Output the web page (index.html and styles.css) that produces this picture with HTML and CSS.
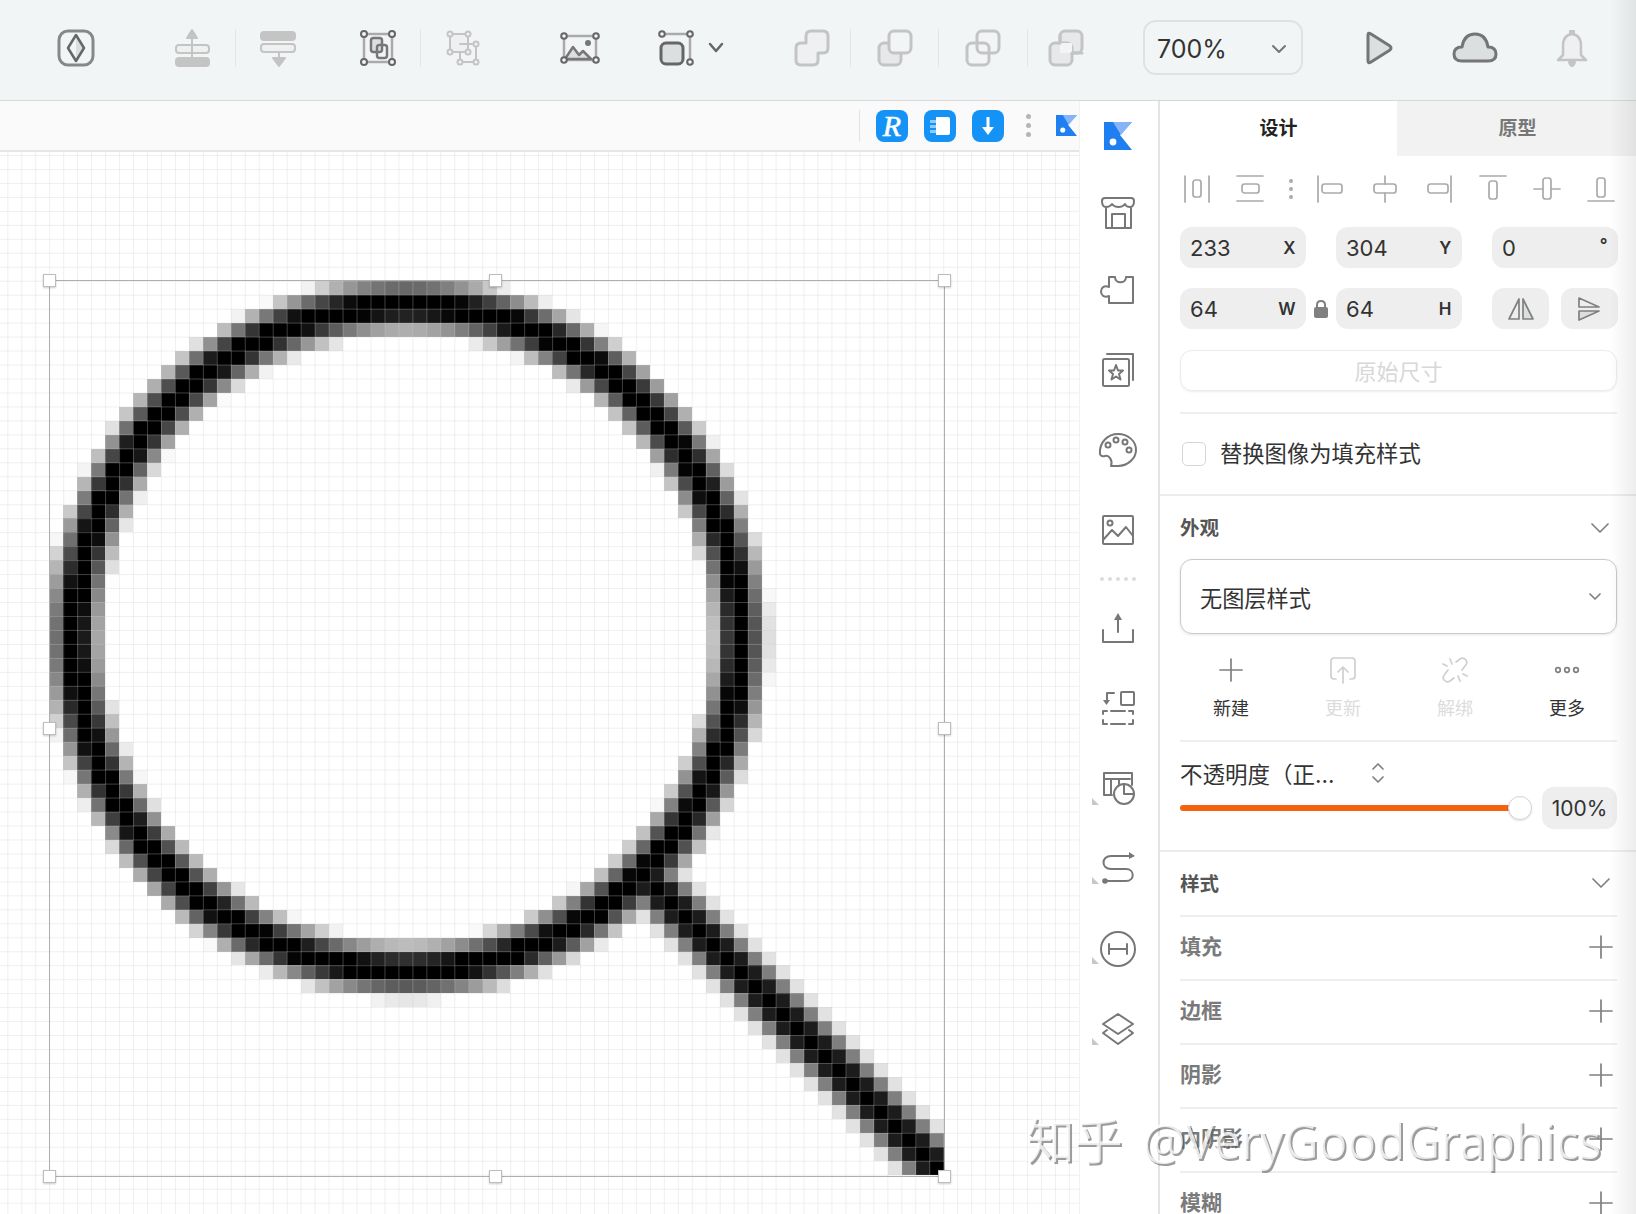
FILE: index.html
```html
<!DOCTYPE html>
<html lang="zh-CN">
<head>
<meta charset="utf-8">
<title>Sketch</title>
<link rel="stylesheet" href="styles.css">
</head>
<body>
<header class="toolbar">
  <svg class="tb ico" viewBox="0 0 40 40"><rect class="w3 c8" x="3" y="3" width="34" height="34" rx="9"/><path class="f-d none-s" d="M20 7L28 20L20 33Z"/><path class="w25 c6" d="M20 7L28 20L20 33L12 20Z"/></svg>
  <svg class="tb ico ml76 light" viewBox="0 0 40 40"><rect class="f-l" x="4" y="17" width="33" height="8" rx="3"/><rect class="f-b" x="4" y="30" width="33" height="8" rx="3"/><path class="f-b" d="M20 2L25 10H15Z"/><path d="M20 10V31"/></svg>
  <div class="sep ml23"></div>
  <svg class="tb ico ml23 light" viewBox="0 0 40 40"><rect class="f-b" x="2" y="4" width="34" height="8" rx="3"/><rect class="f-l" x="2" y="16" width="34" height="8" rx="3"/><path d="M20 24V32"/><path class="f-b" d="M14 30H26L20 38Z"/></svg>
  <svg class="tb ico ml59" viewBox="0 0 40 40"><path class="w25 ca" d="M7 6H33M7 34H33M6 7V33M34 7V33"/><rect class="f-d w25" x="13" y="10" width="11" height="14" rx="2.5"/><rect class="w25" x="19" y="17" width="10" height="13" rx="2.5"/><circle class="hd" cx="6" cy="6" r="3"/><circle class="hd" cx="34" cy="6" r="3"/><circle class="hd" cx="6" cy="34" r="3"/><circle class="hd" cx="34" cy="34" r="3"/></svg>
  <div class="sep ml22"></div>
  <svg class="tb ico ml23 light" viewBox="0 0 40 40"><rect class="f-l" x="6" y="6" width="18" height="18"/><path d="M16 16H32V34H16V24"/><circle class="hd" cx="6" cy="6" r="2.5"/><circle class="hd" cx="24" cy="6" r="2.5"/><circle class="hd" cx="6" cy="24" r="2.5"/><circle class="hd" cx="24" cy="24" r="2.5"/><circle class="hd" cx="32" cy="16" r="2.5"/><circle class="hd" cx="32" cy="34" r="2.5"/><circle class="hd" cx="16" cy="34" r="2.5"/></svg>
  <svg class="tb ico ml75" viewBox="0 0 40 40"><path class="w25 ca" d="M8 8H34M8 32H34M5 10V30M37 10V30"/><path class="f-d w25" d="M6 31L14 19L20 27L24 23L32 31Z"/><circle class="solid" cx="29" cy="15" r="3"/><circle class="hd" cx="5" cy="8" r="2.8"/><circle class="hd" cx="37" cy="8" r="2.8"/><circle class="hd" cx="5" cy="32" r="2.8"/><circle class="hd" cx="37" cy="32" r="2.8"/></svg>
  <svg class="tb ico ml57" viewBox="0 0 40 40"><path class="w25 ca" d="M9 6H31M34 9V31"/><rect class="f-d w3 c6" x="5" y="15" width="22" height="21" rx="5"/><circle class="hd" cx="6" cy="6" r="2.8"/><circle class="hd" cx="34" cy="6" r="2.8"/><circle class="hd" cx="34" cy="34" r="2.8"/></svg>
  <svg class="chev ico ml12" viewBox="0 0 16 16"><path class="w25 c6" d="M2 4L8 11L14 4"/></svg>
  <svg class="tb ico ml68 light" viewBox="0 0 40 40"><path class="f-l w3" d="M19 3H31Q36 3 36 8V20Q36 25 31 25H26V32Q26 37 21 37H9Q4 37 4 32V20Q4 15 9 15H14V8Q14 3 19 3Z"/></svg>
  <div class="sep ml18"></div>
  <svg class="tb ico ml24 light" viewBox="0 0 40 40"><rect class="f-d w3" x="4" y="15" width="22" height="22" rx="5"/><rect class="f-bar w3" x="14" y="3" width="22" height="22" rx="5"/></svg>
  <div class="sep ml23"></div>
  <svg class="tb ico ml24 light" viewBox="0 0 40 40"><rect class="f-bar w3" x="4" y="15" width="22" height="22" rx="5"/><rect class="w3" x="14" y="3" width="22" height="22" rx="5"/></svg>
  <div class="sep ml24"></div>
  <svg class="tb ico ml18 light" viewBox="0 0 40 40"><rect class="f-d w3" x="14" y="3" width="22" height="22" rx="5"/><rect class="f-d w3" x="4" y="15" width="22" height="22" rx="5"/><path class="f-bar none-s" d="M14 15H26V25H14Z"/><path class="w3" d="M14 15V8M26 25H36"/></svg>
  <div class="zoom-select ml57"><span>700%</span><svg class="chev-s ico" viewBox="0 0 16 16"><path class="c7" d="M2 5L8 11L14 5"/></svg></div>
  <svg class="tb ico ml56" viewBox="0 0 40 40"><path class="f-d w3 c7" d="M9 7Q9 4 12 6L31 18Q33 20 31 22L12 34Q9 36 9 33Z"/></svg>
  <svg class="tb ico ml52 wide" viewBox="0 0 48 40"><path class="f-d w3 c7" d="M11 33Q3 33 3 26Q3 19 11 19Q13 6 24 6Q35 6 37 19Q45 19 45 26Q45 33 37 33Z"/></svg>
  <svg class="tb ico ml53 light" viewBox="0 0 40 40"><path class="f-l w25" d="M20 6Q29 7 29 18V27L34 32H6L11 27V18Q11 7 20 6Z"/><path class="f-b" d="M18 3H22V6H18ZM17 34H23Q22 38 20 38Q18 38 17 34Z"/></svg>
</header>

<div class="main">
  <section class="work">
    <div class="strip">
      <div class="strip-sep"></div>
      <div class="app-badge ml16"><span class="r-mark">R</span></div>
      <div class="app-badge ml16">
        <svg class="badge-svg" viewBox="0 0 32 32"><path class="b-white" d="M12 7H24Q26 7 26 9V23Q26 25 24 25H12Z"/><path class="b-pale" d="M6 10H12V13H6ZM6 15H12V18H6ZM6 20H12V23H6Z"/></svg>
      </div>
      <div class="app-badge ml16">
        <svg class="badge-svg" viewBox="0 0 32 32"><path class="b-line" d="M16 7V19"/><path class="b-white" d="M10 17H22L16 25Z"/></svg>
      </div>
      <div class="strip-dots"><i></i><i></i><i></i></div>
      <svg class="strip-kite" viewBox="0 0 28 28"><path class="k-blue" d="M0 0H28L16 13L28 28H0Z"/><path class="k-pale" d="M9 0H28L17 13Z"/><circle class="k-dot" cx="9" cy="20" r="3.4"/></svg>
    </div>
    <div class="board">
      <canvas id="art" class="art" width="64" height="64"></canvas>
      <div class="board-grid"></div>
      <div class="selection">
        <i class="hnd tl"></i><i class="hnd tc"></i><i class="hnd tr"></i>
        <i class="hnd ml"></i><i class="hnd mr"></i>
        <i class="hnd bl"></i><i class="hnd bc"></i><i class="hnd br"></i>
      </div>
    </div>
  </section>

  <nav class="rail">
    <svg class="rail-ico g37" viewBox="0 0 40 40"><path class="k-blue" d="M6 6H34L22 19L34 34H6Z"/><path class="k-pale" d="M15 6H34L23 19Z"/><circle class="k-dot" cx="15" cy="26" r="3.4"/></svg>
    <svg class="rail-ico ico g37" viewBox="0 0 40 40"><path d="M7 5H33Q36 5 36 8Q36 14 32 14Q28 14 27 11Q25 14 20.500 14Q16 14 14 11Q12 14 8 14Q4 14 4 8Q4 5 7 5ZM8 14V35H33V14M14 35V21H27V35"/></svg>
    <svg class="rail-ico ico g39" viewBox="0 0 40 40"><path d="M11 7H17C17 14 28 14 28 7H35V33H11V26C6 28 3 25 3 21.500C3 18 6 15 11 17Z"/></svg>
    <svg class="rail-ico ico g41" viewBox="0 0 40 40"><path d="M9 5H35V31"/><rect x="5" y="10" width="26" height="27" rx="1.500"/><path d="M18 16L20 21.500H25L21 25L22.500 30.500L18 27.500L13.500 30.500L15 25L11 21.500H16Z"/></svg>
    <svg class="rail-ico ico g40" viewBox="0 0 40 40"><path d="M13 36C15 30 11 25 7 26Q3 27 2 24C1 12 10 4 20 4C30 4 38 11 38 20C38 29 29 36 20 36Q15 36 13 36Z"/><circle cx="10" cy="15" r="2.500"/><circle cx="18" cy="10" r="2.500"/><circle cx="27" cy="12" r="2.500"/><circle cx="31" cy="20" r="2.500"/></svg>
    <svg class="rail-ico ico g20" viewBox="0 0 40 40"><rect x="5" y="6" width="30" height="28" rx="1"/><circle cx="12" cy="13" r="2.500"/><path d="M5 30L14 20L20 26L28 17L35 26"/></svg>
    <div class="rail-dots g27"><i></i><i></i><i></i><i></i><i></i></div>
    <svg class="rail-ico ico g40" viewBox="0 0 40 40"><path d="M20 24V8"/><path class="solid" d="M20 5L24 12H16Z"/><path d="M5 22V34H35V22"/></svg>
    <svg class="rail-ico ico g42" viewBox="0 0 40 40"><rect x="23" y="4" width="13" height="13" rx="1"/><path d="M16 5H9V13"/><path class="solid" d="M5 12H12L8.500 17Z"/><path d="M9 23H5V26M13 23H27M31 23H35V26M5 32V36H9M13 36H27M31 36H35V32"/></svg>
    <svg class="rail-ico ico g39" viewBox="0 0 40 40"><path class="mark" d="M-6 35H1L-6 28Z"/><path d="M34 15V3H6V25H14M6 9H32M13 9V25M21 9V17"/><circle class="bgw" cx="26" cy="24" r="10"/><path d="M26 14V24H36"/></svg>
    <svg class="rail-ico ico g40" viewBox="0 0 40 40"><path class="mark" d="M-6 35H1L-6 28Z"/><path d="M33 7H13C3 7 3 20 13 20H28C37 20 37 32 28 32H9"/><path class="solid" d="M31 3L37 7L31 10Z"/><circle class="solid" cx="7" cy="32" r="2.800"/></svg>
    <svg class="rail-ico ico g41" viewBox="0 0 40 40"><path class="mark" d="M-6 35H1L-6 28Z"/><circle cx="20" cy="20" r="17"/><path d="M11 15V25M11 20H29M29 15V25"/></svg>
    <svg class="rail-ico ico" viewBox="0 0 40 40"><path class="mark" d="M-6 35H1L-6 28Z"/><path d="M20 4L35 14L20 24L5 14Z"/><path d="M9 20L5 23L20 34L35 23L31 20"/></svg>
  </nav>

  <aside class="panel">
    <div class="tabs"><div class="tab active">设计</div><div class="tab">原型</div></div>

    <div class="align-row">
      <svg class="al ico thin" viewBox="0 0 28 28"><path d="M2 1V27M26 1V27"/><rect x="10" y="5" width="8" height="17" rx="2.500"/></svg>
      <svg class="al ico thin ml25" viewBox="0 0 28 28"><path d="M1 1H27M1 26H27"/><rect x="6" y="9" width="17" height="9" rx="2.500"/></svg>
      <div class="v-dots ml13"><i></i><i></i><i></i></div>
      <svg class="al ico thin ml11" viewBox="0 0 28 28"><path d="M2 1V27"/><rect x="6" y="9" width="20" height="9" rx="2.500"/></svg>
      <svg class="al ico thin ml27" viewBox="0 0 28 28"><path d="M14 1V9M14 18V27"/><rect x="3" y="9" width="22" height="9" rx="2.500"/></svg>
      <svg class="al ico thin ml26" viewBox="0 0 28 28"><path d="M26 1V27"/><rect x="3" y="9" width="20" height="9" rx="2.500"/></svg>
      <svg class="al ico thin ml26" viewBox="0 0 28 28"><path d="M1 1H27"/><rect x="10" y="6" width="8" height="18" rx="2.500"/></svg>
      <svg class="al ico thin ml26" viewBox="0 0 28 28"><path d="M1 14H10M18 14H27"/><rect x="10" y="3" width="8" height="21" rx="2.500"/></svg>
      <svg class="al ico thin ml26" viewBox="0 0 28 28"><path d="M1 26H27"/><rect x="10" y="3" width="8" height="19" rx="2.500"/></svg>
    </div>

    <div class="fields">
      <div class="field"><span>233</span><b>X</b></div>
      <div></div>
      <div class="field"><span>304</span><b>Y</b></div>
      <div></div>
      <div class="field"><span>0</span><b class="deg">°</b></div>
    </div>
    <div class="fields second">
      <div class="field"><span>64</span><b>W</b></div>
      <div class="lock-slot"><svg class="lock" viewBox="0 0 14 18"><rect class="lock-body" x="0" y="7" width="14" height="11" rx="2"/><path class="lock-arc" d="M3 8V5Q3 1 7 1Q11 1 11 5V8"/></svg></div>
      <div class="field"><span>64</span><b>H</b></div>
      <div></div>
      <div class="mirror-pair">
        <div class="mirror"><svg class="ico thin dark" viewBox="0 0 28 28"><path d="M12 4V24H2Z"/><path class="f-d" d="M16 4V24H26Z"/></svg></div>
        <div class="mirror"><svg class="ico thin dark" viewBox="0 0 28 28"><path d="M4 3L24 12H4Z"/><path class="f-d" d="M4 16H24L4 25Z"/></svg></div>
      </div>
    </div>
    <div class="orig-btn">原始尺寸</div>
    <div class="rule"></div>
    <label class="check-row"><span class="check"></span><span class="check-text">替换图像为填充样式</span></label>

    <div class="full-rule"></div>
    <div class="sec-head first"><span>外观</span><svg class="sec-chev ico thin dark" viewBox="0 0 18 10"><path d="M1 1L9 9L17 1"/></svg></div>
    <div class="style-select"><span>无图层样式</span><svg class="chev-s ico thin dark" viewBox="0 0 16 16"><path d="M3 5L8 10L13 5"/></svg></div>
    <div class="actions">
      <div class="act"><svg class="ico thin dark" viewBox="0 0 28 28"><path d="M14 3V25M3 14H25"/></svg><span>新建</span></div>
      <div class="act off"><svg class="ico thin" viewBox="0 0 28 28"><path d="M7 23H5Q2 23 2 20V5Q2 2 5 2H23Q26 2 26 5V20Q26 23 23 23H21M14 27V11M9 16L14 11L19 16"/></svg><span>更新</span></div>
      <div class="act off"><svg class="ico thin" viewBox="0 0 28 28"><path d="M15 6L19 3Q22 1 25 4Q27 7 24 10L21 14M13 22L9 25Q6 27 3 24Q1 21 4 18L7 14M11 8L9 3M6 10L2 8M17 20L19 25M22 18L26 20"/></svg><span>解绑</span></div>
      <div class="act"><svg class="ico thin dark" viewBox="0 0 28 28"><circle cx="5" cy="14" r="2.300"/><circle cx="14" cy="14" r="2.300"/><circle cx="23" cy="14" r="2.300"/></svg><span>更多</span></div>
    </div>
    <div class="rule action-rule"></div>
    <div class="opacity">
      <div class="op-left">
        <div class="op-label"><span>不透明度（正...</span><svg class="stepper ico thin dark" viewBox="0 0 14 24"><path d="M2 8L7 3L12 8M2 16L7 21L12 16"/></svg></div>
        <div class="slider"><div class="knob"></div></div>
      </div>
      <div class="op-field">100%</div>
    </div>
    <div class="full-rule"></div>

    <div class="sec-head row-first"><b>样式</b><svg class="sec-chev ico thin dark" viewBox="0 0 18 10"><path d="M1 1L9 9L17 1"/></svg></div>
    <div class="row"><span>填充</span><svg class="plus ico thin dark" viewBox="0 0 22 22"><path d="M11 0V22M0 11H22"/></svg></div>
    <div class="row"><span>边框</span><svg class="plus ico thin dark" viewBox="0 0 22 22"><path d="M11 0V22M0 11H22"/></svg></div>
    <div class="row"><span>阴影</span><svg class="plus ico thin dark" viewBox="0 0 22 22"><path d="M11 0V22M0 11H22"/></svg></div>
    <div class="row"><span>内阴影</span><svg class="plus ico thin dark" viewBox="0 0 22 22"><path d="M11 0V22M0 11H22"/></svg></div>
    <div class="row"><span>模糊</span><svg class="plus ico thin dark" viewBox="0 0 22 22"><path d="M11 0V22M0 11H22"/></svg></div>
  </aside>
</div>

<div class="edge-shade"></div>
<div class="watermark">知乎 @VeryGoodGraphics</div>
<script src="app.js"></script>
</body>
</html>
```

FILE: styles.css
```css
* { box-sizing: border-box; }
html, body { margin: 0; padding: 0; }
body {
  position: relative;
  width: 1636px;
  height: 1214px;
  overflow: hidden;
  background: #fff;
  font-family: Inter, "Noto Sans CJK SC", sans-serif;
  color: #333;
}

/* shared icon styling */
.ico { fill: none; stroke: #777; stroke-width: 2; stroke-linecap: round; stroke-linejoin: round; overflow: visible; }
.ico.light { stroke: #c4c4c4; }
.ico.thin { stroke: #aaa; stroke-width: 1.7; }
.ico.thin.dark { stroke: #808080; }
.w25 { stroke-width: 2.5; }
.w3 { stroke-width: 3; }
.c6 { stroke: #666; }
.c7 { stroke: #757575; }
.c8 { stroke: #888; }
.ca { stroke: #aaa; }
.f-d { fill: #dcdfe0; }
.light .f-d { fill: #e6e8e9; }
.f-l { fill: #eef0f1; }
.f-b { fill: #c4c4c4; }
.f-bar { fill: #f2f5f6; }
.none-s { stroke: none; }
.hd { fill: #f2f5f6; stroke: #666; stroke-width: 2; }
.light .hd { stroke: #c4c4c4; }
.solid { fill: #777; stroke: none; }
.mark { fill: #c8c8c8; stroke: none; }
.bgw { fill: #fff; }

.ml11 { margin-left: 11px; }
.ml12 { margin-left: 12px; }
.ml13 { margin-left: 13px; }
.ml16 { margin-left: 16px; }
.ml18 { margin-left: 18px; }
.ml22 { margin-left: 22px; }
.ml23 { margin-left: 23px; }
.ml24 { margin-left: 24px; }
.ml25 { margin-left: 25px; }
.ml26 { margin-left: 26px; }
.ml27 { margin-left: 27px; }
.ml52 { margin-left: 52px; }
.ml53 { margin-left: 53px; }
.ml56 { margin-left: 56px; }
.ml57 { margin-left: 57px; }
.ml59 { margin-left: 59px; }
.ml68 { margin-left: 68px; }
.ml75 { margin-left: 75px; }
.ml76 { margin-left: 76px; }

/* toolbar */
.toolbar {
  height: 101px;
  display: flex;
  align-items: center;
  padding: 0 0 5px 56px;
  background: #f2f5f6;
  border-bottom: 1px solid #d6d9da;
}
.tb { width: 40px; height: 40px; flex: none; }
.tb.wide { width: 48px; }
.chev { width: 16px; height: 16px; flex: none; }
.sep { width: 1px; height: 38px; background: #e2e5e6; flex: none; }
.zoom-select {
  width: 160px;
  height: 55px;
  flex: none;
  display: flex;
  align-items: center;
  justify-content: space-between;
  padding: 2px 14px 0 12px;
  border: 2px solid #dfe2e3;
  border-radius: 13px;
  font-size: 25px;
  color: #333;
}
.chev-s { width: 16px; height: 16px; flex: none; }

/* main */
.main { display: flex; height: 1113px; }
.work { width: 1079px; flex: none; display: flex; flex-direction: column; }
.strip {
  height: 51px;
  flex: none;
  display: flex;
  align-items: center;
  padding-left: 859px;
  background: #fafafa;
  border-bottom: 2px solid #e6e6e6;
  overflow: hidden;
}
.strip-sep { width: 1px; height: 32px; background: #e2e2e2; flex: none; }
.app-badge {
  width: 32px;
  height: 32px;
  flex: none;
  border-radius: 8px;
  background: #1592f6;
  display: flex;
  align-items: center;
  justify-content: center;
}
.r-mark {
  font: italic 400 30px "Liberation Serif", serif;
  -webkit-text-stroke: 0.6px #fff;
  color: #fff;
  line-height: 1;
}
.badge-svg { width: 32px; height: 32px; }
.b-white { fill: #fff; }
.b-pale { fill: #8fcbfa; }
.b-line { stroke: #fff; stroke-width: 3; fill: none; }
.strip-dots { display: flex; flex-direction: column; gap: 4px; margin-left: 22px; width: 5px; flex: none; }
.strip-dots i { width: 5px; height: 5px; border-radius: 50%; background: #b5b5b5; }
.strip-kite { width: 21px; height: 21px; flex: none; margin-left: 25px; }
.k-blue { fill: #1f7ff0; }
.k-pale { fill: #86b4f6; }
.k-dot { fill: #fff; }

.board { position: relative; flex: 1; background: #fff; overflow: hidden; }
.art {
  position: absolute;
  left: 49.3px;
  top: 128.7px;
  width: 894.4px;
  height: 894.4px;
  image-rendering: pixelated;
}
.board-grid {
  position: absolute;
  inset: 0;
  background-image:
    linear-gradient(to right, rgba(205, 205, 205, 0.3) 1.2px, transparent 1.2px),
    linear-gradient(to bottom, rgba(205, 205, 205, 0.3) 1.2px, transparent 1.2px);
  background-size: 13.975px 13.975px;
  background-position: 7.3px 3px;
}
.selection {
  position: absolute;
  left: 49px;
  top: 128px;
  width: 896px;
  height: 897px;
  border: 1px solid #aeaeae;
}
.hnd {
  position: absolute;
  width: 13px;
  height: 13px;
  background: #fff;
  border: 1px solid #bdbdbd;
  box-shadow: 0 1px 2px rgba(0, 0, 0, 0.2);
}
.tl, .tc, .tr { top: -7px; }
.ml, .mr { top: 441px; }
.bl, .bc, .br { bottom: -7px; }
.tl, .ml, .bl { left: -7px; }
.tc, .bc { left: 439px; }
.tr, .mr, .br { right: -7px; }

/* rail */
.rail {
  width: 81px;
  flex: none;
  display: flex;
  flex-direction: column;
  align-items: center;
  padding: 15px 2px 0 0;
  background: #fff;
  border-left: 1px solid #f1f1f1;
  border-right: 2px solid #e4e4e4;
}
.rail-ico { width: 40px; height: 40px; flex: none; overflow: visible; }
.g20 { margin-bottom: 20px; }
.g27 { margin-bottom: 27px; }
.g37 { margin-bottom: 37px; }
.g39 { margin-bottom: 39px; }
.g40 { margin-bottom: 40px; }
.g41 { margin-bottom: 41px; }
.g42 { margin-bottom: 42px; }
.rail-dots { display: flex; gap: 4px; height: 4px; flex: none; margin-top: 7px; }
.rail-dots i { width: 4px; height: 4px; border-radius: 50%; background: #dcdcdc; }

/* panel */
.panel { flex: 1; min-width: 0; background: #fff; overflow: hidden; }
.tabs { display: flex; height: 55px; }
.tab {
  flex: 1;
  display: flex;
  align-items: center;
  justify-content: center;
  padding: 0 0 5px 2px;
  font-size: 19px;
  font-weight: 700;
  color: #777;
  background: #f2f2f2;
}
.tab.active { color: #222; background: #fff; padding-left: 0; }

.align-row { display: flex; align-items: center; height: 28px; margin: 19px 0 0 23px; }
.al { width: 28px; height: 28px; flex: none; }
.v-dots { display: flex; flex-direction: column; gap: 4px; width: 28px; align-items: center; flex: none; }
.v-dots i { width: 4px; height: 4px; border-radius: 50%; background: #aaa; }

.fields {
  display: grid;
  grid-template-columns: 125.5px 30.5px 125.5px 30.5px 125.5px;
  margin: 24px 0 0 20px;
}
.fields.second { margin-top: 20px; }
.field {
  height: 41px;
  display: flex;
  align-items: center;
  justify-content: space-between;
  padding: 0 10px;
  border-radius: 12px;
  background: #eeeeee;
  font-size: 22px;
  color: #333;
}
.field b { font-size: 17px; font-weight: 600; color: #333; }
.field b.deg { align-self: flex-start; margin-top: 8px; }
.lock-slot { display: flex; align-items: center; justify-content: center; }
.lock { width: 14px; height: 18px; }
.lock-body { fill: #808080; }
.lock-arc { fill: none; stroke: #808080; stroke-width: 2; }
.mirror-pair { display: flex; justify-content: space-between; }
.mirror {
  width: 57px;
  height: 41px;
  display: flex;
  align-items: center;
  justify-content: center;
  border-radius: 12px;
  background: #eeeeee;
}
.mirror svg { width: 28px; height: 28px; }

.orig-btn {
  height: 41px;
  margin: 21px 19px 0 20px;
  padding-bottom: 2px;
  display: flex;
  align-items: center;
  justify-content: center;
  border: 1px solid #ececec;
  border-radius: 12px;
  box-shadow: 0 1px 2px rgba(0, 0, 0, 0.08);
  font-size: 22px;
  color: #d8d8d8;
}
.rule { height: 2px; margin: 21px 19px 0 20px; background: #eeeeee; }
.check-row { display: flex; align-items: center; gap: 14px; margin: 28px 0 0 22px; font-size: 22.3px; height: 24px; color: #333; }
.check { width: 24px; height: 24px; flex: none; border: 1px solid #d6d6d6; border-radius: 5px; background: #fff; }
.check-text { margin-top: -4px; }
.full-rule { height: 2px; background: #ededed; }
.check-row + .full-rule { margin-top: 28px; }

.sec-head {
  display: flex;
  align-items: center;
  justify-content: space-between;
  height: 30px;
  margin: 17px 27px 0 20px;
  font-size: 19.5px;
  font-weight: 700;
  color: #555;
}
.sec-head.first span { margin-top: -3px; }
.sec-head b { font-weight: 700; }
.sec-chev { width: 18px; height: 10px; flex: none; }
.style-select {
  height: 75px;
  margin: 16px 19px 0 20px;
  padding: 0 13px 0 19px;
  display: flex;
  align-items: center;
  justify-content: space-between;
  border: 1px solid #c9c9c9;
  border-radius: 12px;
  box-shadow: 0 1px 3px rgba(0, 0, 0, 0.1);
  font-size: 22.2px;
  color: #333;
}
.actions {
  display: grid;
  grid-template-columns: repeat(4, 112px);
  margin: 22px 0 0 15px;
}
.act { display: flex; flex-direction: column; align-items: center; gap: 10px; font-size: 18px; color: #333; }
.act svg { width: 28px; height: 28px; }
.act.off { color: #dcdcdc; }
.act.off svg { stroke: #cfcfcf; }
.action-rule { margin-top: 20px; }
.opacity { display: flex; justify-content: space-between; height: 108px; margin: 0 19px 0 20px; }
.op-left { width: 352px; }
.op-label { display: flex; align-items: center; height: 30px; margin-top: 16px; font-size: 22.5px; color: #333; }
.stepper { width: 14px; height: 24px; margin-left: 37px; flex: none; }
.slider { position: relative; width: 340px; height: 6px; margin-top: 17px; border-radius: 3px; background: #f4640f; }
.knob {
  position: absolute;
  right: -12px;
  top: -9px;
  width: 24px;
  height: 24px;
  border-radius: 50%;
  background: #fff;
  border: 1px solid #d4d4d4;
  box-shadow: 0 1px 2px rgba(0, 0, 0, 0.12);
}
.op-field {
  width: 75px;
  height: 42px;
  margin-top: 45px;
  display: flex;
  align-items: center;
  justify-content: center;
  border-radius: 12px;
  background: #eeeeee;
  font-size: 21px;
  color: #333;
}
.sec-head.row-first { height: 63px; margin: 0 26px 0 20px; padding-bottom: 2px; }
.row {
  height: 64px;
  margin: 0 19px 0 20px;
  padding: 0 5px 2px 0;
  display: flex;
  align-items: center;
  justify-content: space-between;
  border-top: 2px solid #eeeeee;
  font-size: 21px;
  font-weight: 700;
  color: #7a7a7a;
}
.row span { margin-top: -4px; }
.plus { width: 22px; height: 22px; flex: none; }

/* overlays */
.edge-shade {
  position: absolute;
  right: 0;
  top: 0;
  bottom: 0;
  width: 26px;
  background: linear-gradient(to right, rgba(0, 0, 0, 0), rgba(0, 0, 0, 0.07));
  pointer-events: none;
}
.watermark {
  position: absolute;
  left: 1026px;
  top: 1107px;
  font-family: "Open Sans", "Noto Sans CJK SC", sans-serif;
  font-size: 48.5px;
  line-height: 66px;
  letter-spacing: -0.5px;
  word-spacing: 8px;
  white-space: nowrap;
  color: rgba(255, 255, 255, 0.78);
  text-shadow: 2px 2px 0 rgba(90, 90, 90, 0.6);
  pointer-events: none;
}
```

FILE: app.js
```js
// Paints the 64×64 magnifier bitmap being edited, one canvas pixel per cell.
(function () {
  var canvas = document.getElementById('art');
  var ctx = canvas.getContext('2d');
  var img = ctx.createImageData(64, 64);
  var CX = 25.6, CY = 25.55, R = 23.8;

  function distToHandle(x, y) {
    var t = Math.max(42.5, Math.min(70, (x + y) / 2));
    return Math.hypot(x - t, y - t);
  }
  function coverage(d) {
    return Math.max(0, Math.min(1, 0.5 + (1.42 - d) * 0.55));
  }
  for (var row = 0; row < 64; row++) {
    for (var col = 0; col < 64; col++) {
      var x = col + 0.5, y = row + 0.5;
      var ring = Math.abs(Math.hypot(x - CX, y - CY) - R);
      var a = Math.max(coverage(ring), coverage(distToHandle(x, y)));
      var i = (row * 64 + col) * 4;
      img.data[i + 3] = Math.round(a * 255);
    }
  }
  ctx.putImageData(img, 0, 0);
})();
```
